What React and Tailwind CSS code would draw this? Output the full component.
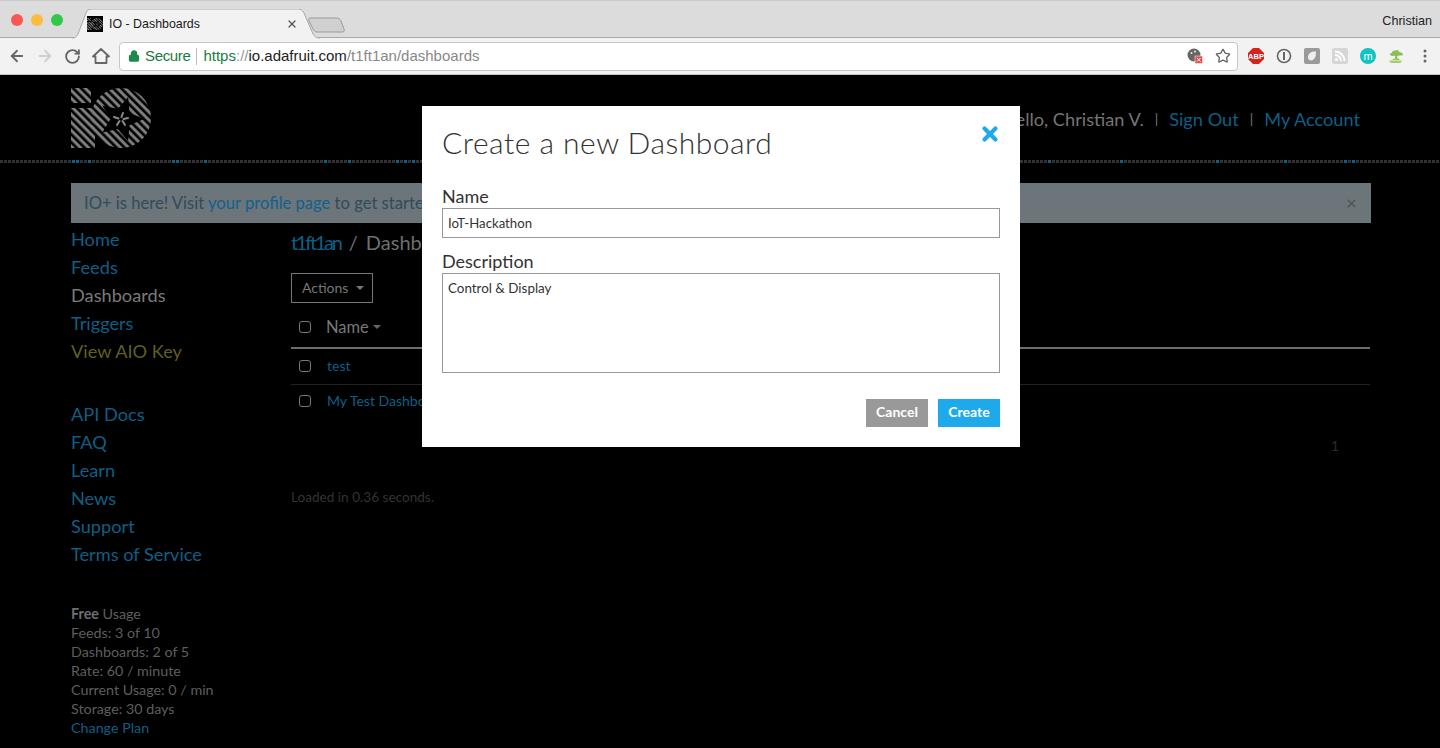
import React from "react";
import { ArrowLeft, ArrowRight, RotateCw, Star, Lock, X } from "lucide-react";

function starPoints(cx, cy, R, r, rot) {
  const pts = [];
  for (let i = 0; i < 10; i++) {
    const a = ((rot + i * 36 - 90) * Math.PI) / 180;
    const rad = i % 2 === 0 ? R : r;
    pts.push(`${(cx + rad * Math.cos(a)).toFixed(1)},${(cy + rad * Math.sin(a)).toFixed(1)}`);
  }
  return pts.join(" ");
}

function Logo({ className, id }) {
  return (
    <svg viewBox="0 0 80 60" className={className}>
      <defs>
        <pattern id={id} width="5.66" height="5.66" patternUnits="userSpaceOnUse" patternTransform="rotate(45)">
          <rect width="5.66" height="3" fill="#7d7d7d" />
        </pattern>
      </defs>
      <rect x="0" y="0" width="20" height="15" fill={`url(#${id})`} />
      <rect x="0" y="20" width="24" height="40" fill={`url(#${id})`} />
      <circle cx="50" cy="30" r="30" fill={`url(#${id})`} />
      <polygon points={starPoints(50, 31, 23, 10.5, 18)} fill="#000" />
      <g stroke="#8a8a8a" strokeWidth="2" strokeLinecap="round">
        <line x1="50.5" y1="29" x2="52" y2="25" />
        <line x1="52.5" y1="31" x2="57" y2="30" />
        <line x1="51.5" y1="33" x2="54" y2="37" />
        <line x1="48.5" y1="33" x2="46" y2="37" />
        <line x1="47.5" y1="30.5" x2="43" y2="29" />
      </g>
    </svg>
  );
}

function DottedRule() {
  const blue = new Set([75, 79, 91, 175, 179, 207, 327, 351, 399, 407, 415, 1051, 1123, 1219, 1287, 1347, 1355]);
  const cells = [];
  for (let x = 3; x < 1440; x += 4) {
    cells.push(<rect key={x} x={x - 3} y="0" width="3" height="3" fill={blue.has(x) ? "#0f5f85" : "#333333"} />);
  }
  return (
    <svg width="1440" height="3" className="block">
      {cells}
    </svg>
  );
}

function BrowserChrome() {
  return (
    <div className="font-['Liberation_Sans',sans-serif]">
      <div className="relative h-[38px] bg-[#dcdcdd] border-b border-[#a9a9a9] shadow-[inset_0_1px_0_#c9c9c9]">
        <div className="absolute left-[11px] top-[14px] flex gap-[8px]">
          <span className="w-3 h-3 rounded-full bg-[#fc5753]" />
          <span className="w-3 h-3 rounded-full bg-[#fdbc40]" />
          <span className="w-3 h-3 rounded-full bg-[#33c748]" />
        </div>
        <svg width="280" height="30" className="absolute left-[70px] top-[9px]">
          <path d="M2 29 C6 29 7 27 8 25 L16 4 C17 1 19 0 22 0 L228 0 C231 0 232 1 234 4 L243 25 C244 27 246 29 250 29" fill="#f2f2f2" stroke="#a9a9a9" />
          <path d="M240 9 L265 9 C268 9 269 10 270 12 L273 20 C274 22 273 23 271 23 L246 23 C244 23 243 22 242 20 L238 12 C237 10 238 9 240 9 Z" transform="translate(1 0)" fill="#d0d0d1" stroke="#9a9a9a" />
        </svg>
        <Logo id="favlogo" className="absolute left-[87px] top-[16px] w-4 h-4 bg-black" />
        <span className="absolute left-[109px] top-[15px] text-[12.4px] leading-[18px] text-[#1a1a1a]">IO - Dashboards</span>
        <X size={12} strokeWidth={2.6} className="absolute left-[286px] top-[18px] text-[#555]" />
        <span className="absolute right-[8px] top-[12px] text-[12.6px] leading-[18px] text-[#222]">Christian</span>
      </div>
      <div className="flex items-center h-[37px] bg-[#f2f2f2] border-b border-[#c4c4c4]">
        <div className="flex items-center w-[119px] pl-[8px] gap-[10px] text-[#666]">
          <ArrowLeft size={18} strokeWidth={2.4} />
          <ArrowRight size={18} strokeWidth={2.4} className="text-[#cfcfcf]" />
          <RotateCw size={17} strokeWidth={2.6} />
          <svg width="18" height="18" viewBox="0 0 18 18" className="ml-[1px]">
            <path d="M9 2 L17 9.5 L14.5 9.5 L14.5 16 L3.5 16 L3.5 9.5 L1 9.5 Z" fill="none" stroke="#666" strokeWidth="1.8" strokeLinejoin="round" />
          </svg>
        </div>
        <div className="flex items-center w-[1119px] h-[29px] bg-white border border-[#c6c6c6] rounded-[4px] pl-[8px] pr-[6px] text-[15px] leading-[20px]">
          <Lock size={12} strokeWidth={2.6} className="text-[#1b8a4b] fill-[#1b8a4b]" />
          <span className="ml-[5px] text-[#1b7a43] tracking-[-0.35px]">Secure</span>
          <span className="ml-[6px] mr-[6px] w-px h-[17px] bg-[#bbbbbb]" />
          <span className="text-[#1b7a43]">https</span>
          <span className="text-[#999]">://</span>
          <span className="text-[#222]">io.adafruit.com</span>
          <span className="text-[#888]">/t1ft1an/dashboards</span>
          <span className="ml-auto flex items-center gap-[12px]">
            <svg width="16" height="16" viewBox="0 0 16 16">
              <circle cx="7" cy="7" r="6.5" fill="#666" />
              <circle cx="4.5" cy="5" r="1" fill="#eee" />
              <circle cx="8" cy="3.5" r="1" fill="#eee" />
              <rect x="8" y="8" width="7.5" height="7.5" fill="#e0524d" stroke="#fff" strokeWidth="0.5" />
              <path d="M10 10 L13.5 13.5 M13.5 10 L10 13.5" stroke="#fff" strokeWidth="1" />
            </svg>
            <Star size={16} strokeWidth={2} className="text-[#666]" />
          </span>
        </div>
        <div className="flex items-center pl-[10px] gap-[12px]">
          <svg width="16" height="16" viewBox="0 0 16 16">
            <polygon points="5,0 11,0 16,5 16,11 11,16 5,16 0,11 0,5" fill="#d8201c" />
            <text x="8" y="10.8" textAnchor="middle" fontSize="7.5" fontWeight="700" fill="#fff" fontFamily="Liberation Sans">ABP</text>
          </svg>
          <svg width="16" height="16" viewBox="0 0 16 16">
            <circle cx="8" cy="8" r="6.5" fill="none" stroke="#666" strokeWidth="1.6" />
            <rect x="7" y="4" width="2" height="8" fill="#666" />
          </svg>
          <svg width="16" height="16" viewBox="0 0 16 16">
            <rect width="16" height="16" rx="2" fill="#9a9a9a" />
            <path d="M4 9 C4 5 8 3 12 3.5 C12 8 11 12 7 12.5 C5 12.5 4 11 4 9 Z" fill="#eeeeee" />
          </svg>
          <svg width="16" height="16" viewBox="0 0 16 16">
            <rect width="16" height="16" rx="2" fill="#d6d6d6" />
            <circle cx="4.5" cy="11.5" r="1.6" fill="#fff" />
            <path d="M3 7 A6 6 0 0 1 9 13 M3 3.5 A9.5 9.5 0 0 1 12.5 13" stroke="#fff" strokeWidth="2" fill="none" />
          </svg>
          <span className="flex items-center justify-center w-4 h-4 rounded-full bg-[#13c2c2] text-white text-[11px] leading-none">m</span>
          <svg width="16" height="16" viewBox="0 0 16 16">
            <path d="M7 8 C8 10 6 11 4 12 C6 12 7 12 8 11.5 C9 12 11 12 12 12 L9.5 10 C9 9.5 9 9 9 8 Z" fill="#8cc152" />
            <path d="M1 12.5 L14 12.5 L12.5 15 L3 15 Z" fill="#a6d06c" />
            <path d="M2 6 C2 5 3 5 4 5 C4 3 6 2 7 3 C8 1 11 2 11 4 C13 4 15 5 15 7 C13 8 11 7 10 8 C8 9 6 7 5 8 C4 8 2 8 2 6 Z" fill="#8cc152" />
          </svg>
          <svg width="16" height="16" viewBox="0 0 16 16" className="ml-[1px]">
            <circle cx="8" cy="3" r="1.5" fill="#666" />
            <circle cx="8" cy="8" r="1.5" fill="#666" />
            <circle cx="8" cy="13" r="1.5" fill="#666" />
          </svg>
        </div>
      </div>
    </div>
  );
}

function Caret({ className }) {
  return <span className={`inline-block w-0 h-0 border-x-[4px] border-x-transparent border-t-[4px] ${className}`} />;
}

function Box() {
  return <span className="block w-[12px] h-[12px] rounded-[3px] border border-[#777] bg-black" />;
}

const nav1 = ["Home", "Feeds", "Dashboards", "Triggers", "View AIO Key"];
const nav2 = ["API Docs", "FAQ", "Learn", "News", "Support", "Terms of Service"];

function Sidebar() {
  return (
    <aside className="w-[220px] shrink-0 text-[18.2px] leading-[28px]">
      <ul>
        {nav1.map((n) => (
          <li
            key={n}
            className={n === "Dashboards" ? "text-[#7a7a7a]" : n === "View AIO Key" ? "text-[#5f5f22]" : "text-[#0f5f85]"}
          >
            {n}
          </li>
        ))}
      </ul>
      <ul className="mt-[35px] text-[#0f5f85]">
        {nav2.map((n) => (
          <li key={n}>{n}</li>
        ))}
      </ul>
      <div className="mt-[36px] text-[14.3px] leading-[19px] text-[#5e5e5e]">
        <div>
          <b className="font-bold text-[#6e6e6e]">Free</b> Usage
        </div>
        <div>Feeds: 3 of 10</div>
        <div>Dashboards: 2 of 5</div>
        <div>Rate: 60 / minute</div>
        <div>Current Usage: 0 / min</div>
        <div>Storage: 30 days</div>
        <div className="text-[#0f5f85]">Change Plan</div>
      </div>
    </aside>
  );
}

function Main() {
  return (
    <main className="flex-1 min-w-0">
      <h1 className="text-[20px] leading-[28px] mt-[3px] text-[#6e6e6e]">
        <span className="text-[#0f5f85] tracking-[-2.3px]">t1ft1an</span> <span className="mx-[3px]">/</span> Dashboards
      </h1>
      <button className="mt-[17px] flex items-center gap-[8px] w-[82px] h-[30px] pl-[10px] pb-[1px] border border-[#777] text-[14px] text-[#777]">
        Actions <Caret className="border-t-[#777]" />
      </button>
      <div className="mt-[10px] flex items-center h-[36px] pb-[6px] border-b-2 border-[#6e6e6e] pl-[8px] text-[16.5px] text-[#777]">
        <Box />
        <span className="ml-[15px]">Name</span>
        <Caret className="ml-[4px] border-t-[#666]" />
      </div>
      <div className="flex items-center h-[36px] pb-[2px] border-b border-[#222] pl-[8px] text-[14px] text-[#0f5f85]">
        <Box />
        <span className="ml-[16px]">test</span>
      </div>
      <div className="flex items-center h-[32px] pb-[1px] pl-[8px] text-[14px] text-[#0f5f85]">
        <Box />
        <span className="ml-[16px]">My Test Dashboard</span>
      </div>
      <div className="mt-[19px] pr-[31px] text-right text-[14px] leading-[20px] text-[#2c2c2c]">1</div>
      <p className="mt-[31px] text-[13.6px] leading-[20px] text-[#333]">Loaded in 0.36 seconds.</p>
    </main>
  );
}

function Modal() {
  return (
    <div className="absolute left-[422px] top-[106px] w-[598px] h-[341px] bg-white px-[20px] text-[#333]">
      <div className="flex items-start justify-between pt-[18px]">
        <h2 className="text-[30px] leading-[36px] font-light tracking-[0.5px] text-[#333]">Create a new Dashboard</h2>
        <X size={22} strokeWidth={4.6} className="mt-[-1px] mr-[-1px] text-[#1eaaea]" />
      </div>
      <label className="block mt-[26px] text-[18px] leading-[20px] text-[#333]">Name</label>
      <input
        readOnly
        value="IoT-Hackathon"
        className="block mt-[2px] w-[558px] h-[30px] border border-[#999] px-[5px] text-[13.2px] text-[#333] outline-none"
      />
      <label className="block mt-[13px] text-[18px] leading-[20px] text-[#333]">Description</label>
      <textarea
        readOnly
        value="Control & Display"
        className="block mt-[2px] w-[558px] h-[100px] border border-[#999] px-[5px] py-[5px] text-[13.4px] leading-[18px] text-[#333] outline-none resize-none"
      />
      <div className="flex justify-end gap-[10px] mt-[26px]">
        <button className="w-[62px] h-[28px] pb-[3px] bg-[#999] text-white text-[14px] font-bold">Cancel</button>
        <button className="w-[62px] h-[28px] pb-[3px] bg-[#1eaaea] text-white text-[14px] font-bold">Create</button>
      </div>
    </div>
  );
}

export default function App() {
  return (
    <div className="relative w-[1440px] h-[748px] overflow-hidden bg-black font-['Lato','Open_Sans',sans-serif]">
      <BrowserChrome />
      <header className="relative h-[85px] pl-[71px] pt-[13px]">
        <Logo id="mainlogo" className="w-[80px] h-[60px]" />
        <div className="absolute right-[80px] top-[30px] flex items-center text-[18.2px] leading-[28px] text-[#757575]">
          <span>Hello, Christian V.</span>
          <span className="mx-[11px] text-[14px] text-[#777]">|</span>
          <span className="text-[#0f5f85]">Sign Out</span>
          <span className="mx-[11px] text-[14px] text-[#777]">|</span>
          <span className="text-[#0f5f85]">My Account</span>
        </div>
      </header>
      <DottedRule />
      <section className="mt-[20px] ml-[71px] w-[1300px] h-[40px] flex items-center justify-between bg-[#6c757a] pl-[13px] pr-[13px] text-[16.6px] text-[#324a59]">
        <span>
          IO+ is here! Visit <span className="text-[#12608c]">your profile page</span> to get started.
        </span>
        <X size={13} strokeWidth={3} className="text-[#4f5659]" />
      </section>
      <div className="flex mt-[2px] pl-[71px] pr-[70px]">
        <Sidebar />
        <Main />
      </div>
      <Modal />
    </div>
  );
}
